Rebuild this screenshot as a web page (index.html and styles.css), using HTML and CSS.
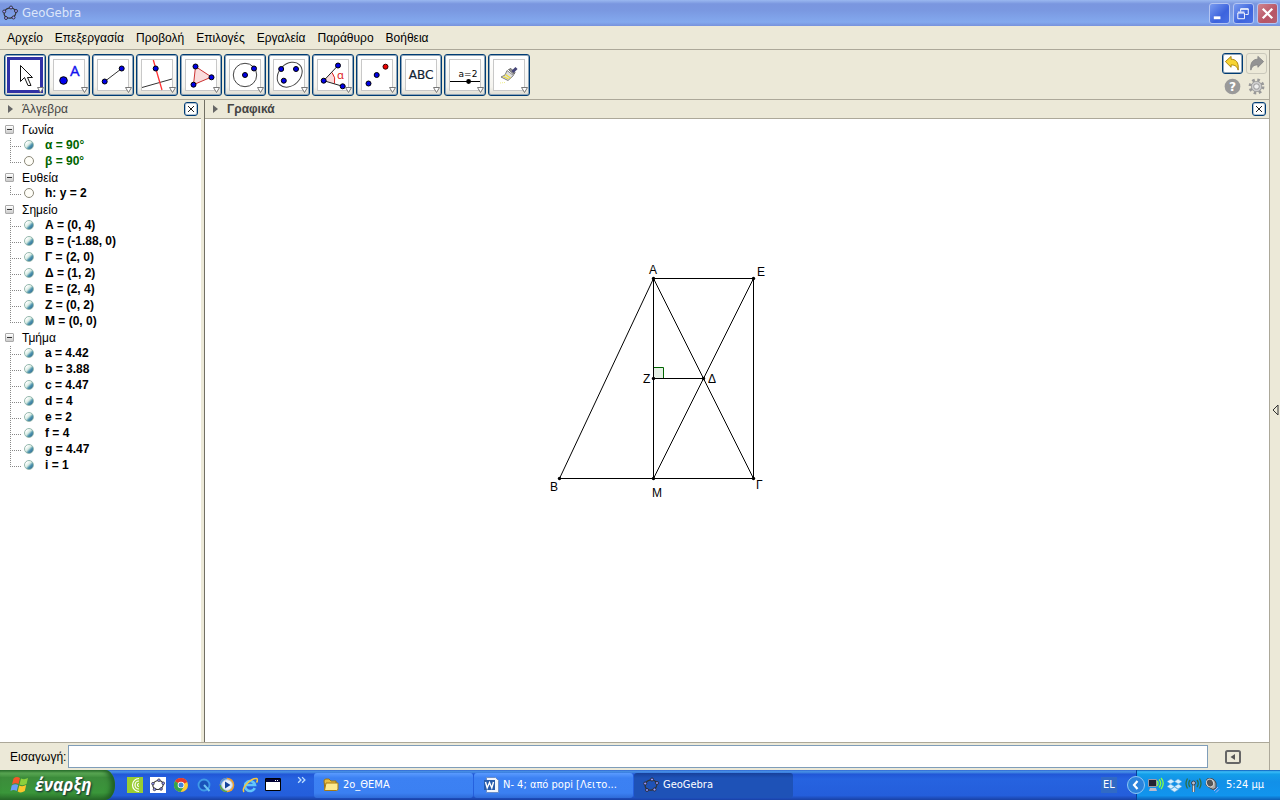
FILE: index.html
```html
<!DOCTYPE html>
<html lang="el">
<head>
<meta charset="utf-8">
<title>GeoGebra</title>
<link rel="stylesheet" href="styles.css">
</head>
<body>
<svg class="defs" aria-hidden="true">
  <defs>
    <symbol id="logo" viewBox="0 0 16 16">
      <ellipse cx="8" cy="8" rx="6" ry="5" fill="none" stroke="#333" stroke-width="1.2" transform="rotate(-15 8 8)"/>
      <g fill="#99f" stroke="#222" stroke-width=".8"><circle cx="9" cy="2.5" r="1.5"/><circle cx="14" cy="6" r="1.5"/><circle cx="11.5" cy="12.5" r="1.5"/><circle cx="4" cy="13" r="1.5"/><circle cx="2.2" cy="6.5" r="1.5"/></g>
    </symbol>
    <symbol id="drop" viewBox="0 0 7 6"><path d="M.5 .5h6L3.5 5.500z" fill="#fff" stroke="#777"/></symbol>
  </defs>
</svg>

<header class="titlebar">
  <svg class="icon16"><use href="#logo"/></svg>
  <h1 class="title">GeoGebra</h1>
  <button class="winbtn" aria-label="Ελαχιστοποίηση"><svg viewBox="0 0 20 20"><path d="M4 13h7v3H4z" fill="#fff"/></svg></button>
  <button class="winbtn" aria-label="Επαναφορά"><svg viewBox="0 0 20 20" fill="none" stroke="#fff"><path d="M7 8V5h8v6h-3M7 5.500h8M4 9.500h7v6H4zM4 8.500h7"/></svg></button>
  <button class="winbtn winclose" aria-label="Κλείσιμο"><svg viewBox="0 0 20 20"><path d="M5 5l10 10M15 5L5 15" stroke="#fff" stroke-width="2.400"/></svg></button>
</header>

<nav class="menubar">
  <button>Αρχείο</button><button>Επεξεργασία</button><button>Προβολή</button><button>Επιλογές</button><button>Εργαλεία</button><button>Παράθυρο</button><button>Βοήθεια</button>
</nav>

<div class="app">
<main class="main">
  <div class="toolbar">
    <button class="tool selected" aria-label="Μετακίνηση"><svg viewBox="2 2 38 38"><path d="M16.500 11.500v16l4-4 3.500 8h3l-3.500-8h5z" fill="#fff" stroke="#111"/><use href="#drop" x="33" y="33" width="7" height="6"/></svg></button>
    <button class="tool" aria-label="Σημείο"><svg viewBox="2 2 38 38"><circle cx="15.500" cy="26.500" r="3.800" fill="#00e" stroke="#000"/><text x="22" y="22" class="glyph-a">A</text><use href="#drop" x="33" y="33" width="7" height="6"/></svg></button>
    <button class="tool" aria-label="Τμήμα"><svg viewBox="2 2 38 38"><path d="M12.700 27.500L29.700 14.500" stroke="#333"/><g class="pt"><circle cx="12.700" cy="27.500" r="2.500"/><circle cx="29.700" cy="14.500" r="2.500"/></g><use href="#drop" x="33" y="33" width="7" height="6"/></svg></button>
    <button class="tool" aria-label="Κάθετη ευθεία"><svg viewBox="2 2 38 38"><path d="M6 33.500l30-8.500" stroke="#333"/><path d="M17.300 6L26 36" stroke="#f33" stroke-width="1.300"/><circle class="pt" cx="19.700" cy="14.500" r="2.500"/><use href="#drop" x="33" y="33" width="7" height="6"/></svg></button>
    <button class="tool" aria-label="Πολύγωνο"><svg viewBox="2 2 38 38"><path d="M15.500 12.500l16 10.500-18 7.700z" fill="#fadcdc" stroke="#c33"/><g class="pt"><circle cx="15.500" cy="12.500" r="2.500"/><circle cx="31.500" cy="23.300" r="2.500"/><circle cx="13.500" cy="30.700" r="2.500"/></g><use href="#drop" x="33" y="33" width="7" height="6"/></svg></button>
    <button class="tool" aria-label="Κύκλος"><svg viewBox="2 2 38 38"><circle cx="21" cy="21" r="11.700" fill="none" stroke="#444"/><g class="pt"><circle cx="21" cy="21" r="2.500"/><circle cx="30" cy="14.500" r="2.500"/></g><use href="#drop" x="33" y="33" width="7" height="6"/></svg></button>
    <button class="tool" aria-label="Έλλειψη"><svg viewBox="2 2 38 38"><ellipse cx="21.700" cy="20.700" rx="14" ry="10.700" transform="rotate(-45 21.700 20.700)" fill="none" stroke="#444"/><g class="pt"><circle cx="13.200" cy="15" r="2.500"/><circle cx="28" cy="15" r="2.500"/><circle cx="15.800" cy="26.700" r="2.500"/></g><use href="#drop" x="33" y="33" width="7" height="6"/></svg></button>
    <button class="tool" aria-label="Γωνία"><svg viewBox="2 2 38 38"><path d="M11.700 26.700L20 18.500Q24 23.500 22.500 29.500z" fill="#fadcdc"/><path d="M20 18.500Q24 23.500 22.500 29.500" fill="none" stroke="#d22"/><path d="M26 11.500L11.700 26.700l19 5.600" fill="none" stroke="#222"/><text x="25" y="25" class="glyph-alpha">α</text><g class="pt"><circle cx="26" cy="11.500" r="2.500"/><circle cx="11.700" cy="26.700" r="2.500"/><circle cx="30.700" cy="32.300" r="2.500"/></g><use href="#drop" x="33" y="33" width="7" height="6"/></svg></button>
    <button class="tool" aria-label="Συμμετρία"><svg viewBox="2 2 38 38"><g class="pt"><circle cx="12.500" cy="29.500" r="2.500"/><circle cx="20.700" cy="21" r="2.500"/></g><circle cx="29.500" cy="12.700" r="2.500" fill="#e00" stroke="#300"/><use href="#drop" x="33" y="33" width="7" height="6"/></svg></button>
    <button class="tool" aria-label="Κείμενο"><svg viewBox="2 2 38 38"><text x="21" y="25" text-anchor="middle" class="glyph-abc">ABC</text><use href="#drop" x="33" y="33" width="7" height="6"/></svg></button>
    <button class="tool" aria-label="Δρομέας"><svg viewBox="2 2 38 38"><text x="24" y="23" text-anchor="middle" class="glyph-eq">a=2</text><path d="M6 27.500h30" stroke="#000"/><circle cx="24.600" cy="27.500" r="2.400"/><use href="#drop" x="33" y="33" width="7" height="6"/></svg></button>
    <button class="tool" aria-label="Μορφοποίηση"><svg viewBox="2 2 38 38"><path d="M19 16.500l6.500 5-5.500 5-7-3.500 4-2z" fill="#ddd" stroke="#666" stroke-width=".8"/><path d="M15 22.500l5.500 2.500M17.500 20.500l5 3.500" stroke="#ed3" stroke-width="1.200"/><path d="M20.500 15.500l5.500 5 1-2-4-4z" fill="#999" stroke="#444" stroke-width=".7"/><path d="M24.500 18l4-4" stroke="#447" stroke-width="3"/><path d="M12 29l5-.5" stroke="#ee8" stroke-dasharray="1 1"/><use href="#drop" x="33" y="33" width="7" height="6"/></svg></button>
    <div class="actions">
      <button class="action undo" aria-label="Αναίρεση"><svg viewBox="0 0 18 18"><path d="M1.500 7L7.500 1.500v3C12 4.500 16 7 15 16c-1-4-3.500-5.500-7.500-5.500v2.500z" fill="#f7d433" stroke="#a8820a"/></svg></button>
      <button class="action redo" aria-label="Επανάληψη"><svg viewBox="0 0 18 18"><path d="M16.500 7L10.500 1.500v3C6 4.500 2 7 3 16c1-4 3.500-5.500 7.500-5.500v2.500z" fill="#939393" stroke="#888"/></svg></button>
      <button class="action" aria-label="Βοήθεια εργαλείου"><svg viewBox="0 0 18 18"><circle cx="9" cy="9" r="8.300" fill="#999"/><text x="9" y="13.500" text-anchor="middle" class="glyph-help">?</text></svg></button>
      <button class="action" aria-label="Ρυθμίσεις"><svg viewBox="0 0 18 18"><circle cx="9" cy="9" r="6.900" fill="none" stroke="#999" stroke-width="3" stroke-dasharray="2.710 2.710"/><circle cx="9" cy="9" r="4.200" fill="#eee" stroke="#999" stroke-width="3.400"/><circle cx="9" cy="9" r="4.200" fill="none" stroke="#ccc" stroke-width="1.800"/></svg></button>
    </div>
  </div>

  <div class="views">
    <section class="panel algebra">
      <div class="panelhead"><svg class="arrow" viewBox="0 0 5 8"><path d="M0 0l5 4-5 4z" fill="#666"/></svg><h2 class="panelname light">Άλγεβρα</h2><button class="close" aria-label="Κλείσιμο άλγεβρας"><svg viewBox="0 0 10 10"><path d="M2 2l6 6M8 2L2 8" stroke="#222"/></svg></button></div>
      <div class="tree">
        <button class="node">Γωνία</button>
        <ul class="items green"><li class="on">α = 90°</li><li>β = 90°</li></ul>
        <button class="node">Ευθεία</button>
        <ul class="items"><li>h: y = 2</li></ul>
        <button class="node">Σημείο</button>
        <ul class="items"><li class="on">Α = (0, 4)</li><li class="on">Β = (-1.88, 0)</li><li class="on">Γ = (2, 0)</li><li class="on">Δ = (1, 2)</li><li class="on">Ε = (2, 4)</li><li class="on">Ζ = (0, 2)</li><li class="on">Μ = (0, 0)</li></ul>
        <button class="node">Τμήμα</button>
        <ul class="items"><li class="on">a = 4.42</li><li class="on">b = 3.88</li><li class="on">c = 4.47</li><li class="on">d = 4</li><li class="on">e = 2</li><li class="on">f = 4</li><li class="on">g = 4.47</li><li class="on">i = 1</li></ul>
      </div>
    </section>
    <section class="panel graphics">
      <div class="panelhead"><svg class="arrow" viewBox="0 0 5 8"><path d="M0 0l5 4-5 4z" fill="#666"/></svg><h2 class="panelname">Γραφικά</h2><button class="close" aria-label="Κλείσιμο γραφικών"><svg viewBox="0 0 10 10"><path d="M2 2l6 6M8 2L2 8" stroke="#222"/></svg></button></div>
      <svg class="plane" role="img" aria-label="Γεωμετρικό σχήμα">
        <path d="M448.500 248.500h10v11h-10z" fill="#e5f0e5" stroke="#006400"/>
        <g stroke="#000" fill="none"><path d="M548.500 159.500h-100v200M548.500 159.500v200M354.500 359.500h194M448.500 259.500h50"/><path d="M354.500 359.500l94-200 100 200M448.500 359.500l100-200"/></g>
        <g><circle cx="448.500" cy="159.500" r="1.700"/><circle cx="548.500" cy="159.500" r="1.700"/><circle cx="448.500" cy="259.500" r="1.700"/><circle cx="498.500" cy="259.500" r="1.700"/><circle cx="354.500" cy="359.500" r="1.700"/><circle cx="448.500" cy="359.500" r="1.700"/><circle cx="548.500" cy="359.500" r="1.700"/></g>
        <g class="labels"><text x="444" y="155">Α</text><text x="552" y="157">Ε</text><text x="438" y="264">Ζ</text><text x="503" y="264">Δ</text><text x="345" y="372">Β</text><text x="447" y="378">Μ</text><text x="551" y="370">Γ</text></g>
      </svg>
    </section>
  </div>

  <div class="inputbar">
    <label for="cmd">Εισαγωγή:</label>
    <input id="cmd" type="text">
    <button class="inputhelp" aria-label="Βοήθεια εισαγωγής"><svg viewBox="0 0 16 14"><rect x="1" y="1" width="14" height="12" rx="1.500" fill="none" stroke="#666" stroke-width="2"/><path d="M10 4v6L5.500 7z" fill="#555"/></svg></button>
  </div>
</main>
<aside class="sidestrip"><button aria-label="Προοπτικές"><svg viewBox="0 0 7 12"><path d="M6 1v10L1 6z" fill="#ece9d8" stroke="#333"/></svg></button></aside>
</div>

<footer class="taskbar">
  <button class="start">
    <svg class="flag" viewBox="0 0 20 18"><path d="M3.500 2.500Q6.500 0 10 2L8.500 8Q5.500 6.500 2 8.500z" fill="#f4562a"/><path d="M11 2.500Q14.500 4 18 2L16.500 8Q13 10 9.500 8.500z" fill="#8bd03c"/><path d="M1.700 9.500Q5 7.500 8.200 9L6.700 15Q3.500 13 .5 15z" fill="#6a9df8"/><path d="M9.200 9.500Q12.500 11 16.200 9L14.800 15Q11 17.500 7.700 15.500z" fill="#fbc62c"/></svg>
    <span>έναρξη</span>
  </button>
  <div class="quick">
    <button aria-label="Notes"><svg viewBox="0 0 16 16"><path fill="#9acd32" d="M0 0h16v16H0z"/><g fill="none" stroke="#fff" stroke-width="1.200"><path d="M12 1.500a6.500 6.500 0 0 0 0 13M12 4a4 4 0 0 0 0 8M12 6.500a1.500 1.500 0 0 0 0 3"/></g></svg></button>
    <button aria-label="GeoGebra"><svg viewBox="0 0 16 16"><path fill="#fff" d="M0 0h16v16H0z"/><use href="#logo" x="1" y="1" width="14" height="14"/></svg></button>
    <button aria-label="Chrome"><svg viewBox="0 0 16 16"><circle cx="8" cy="8" r="7" fill="#fc3"/><path d="M8 8L2 4.300A7 7 0 0 1 14.300 5z" fill="#e33b2e"/><path d="M8 8L2 4.300A7 7 0 0 0 7.500 15L11 9.500z" fill="#35a44c"/><circle cx="8" cy="8" r="3.300" fill="#fff"/><circle cx="8" cy="8" r="2.500" fill="#3e83e0"/></svg></button>
    <button aria-label="QuickTime"><svg viewBox="0 0 16 16"><circle cx="8" cy="8" r="5.500" fill="#1953ba" stroke="#3f9ae8" stroke-width="1.800"/><path d="M8 8l5.500 6" stroke="#6cc4f4" stroke-width="2"/></svg></button>
    <button aria-label="Media Player"><svg viewBox="0 0 16 16"><circle cx="8" cy="8" r="7.300" fill="#f1a12d"/><path d="M8 .7a7.300 7.300 0 0 0-7.300 7.300H8z" fill="#4b8fe2"/><path d="M.7 8A7.300 7.300 0 0 0 8 15.300V8z" fill="#50a550"/><circle cx="8" cy="8" r="5.300" fill="#e8f1fc" stroke="#bcd"/><path d="M6 4.500v7l5.500-3.500z" fill="#12439c"/></svg></button>
    <button aria-label="Internet Explorer"><svg viewBox="0 0 16 16"><path d="M12.700 11a5 5 0 1 1 .3-3H4" fill="none" stroke="#63c5fa" stroke-width="2.600"/><path d="M2 15C-1 11 9 1 14.500 1.500c1.500.5 1 2.500 0 4" fill="none" stroke="#f8c83c" stroke-width="1.500"/></svg></button>
    <button aria-label="Επιφάνεια εργασίας"><svg viewBox="0 0 16 16"><path fill="#fff" stroke="#000" d="M.5 1.500h15v12H.5z"/><path fill="#003" d="M1 2h14v3H1z"/><path d="M10 3.500h4" stroke="#fff" stroke-dasharray="1 1"/></svg></button>
    <button class="more" aria-label="Περισσότερα"><svg viewBox="0 0 8 16"><path d="M1 1l2.500 2.500L1 6M4.500 1L7 3.500 4.500 6" fill="none" stroke="#bdf" stroke-width="1.200"/></svg></button>
  </div>
  <div class="tasks">
    <button class="task"><svg class="icon16" viewBox="0 0 16 16"><path d="M1 4q0-2 2-2h3l2 2h5v9H2z" fill="#e8bd42" stroke="#9c7412"/><path d="M3 6h12v6q0 1.500-1.500 1.500H1.500z" fill="#fdea90" stroke="#a77a12"/></svg><span>2ο_ΘΕΜΑ</span></button>
    <button class="task"><svg class="icon16" viewBox="0 0 16 16"><path d="M3.500 .5h9l3 3v12h-12z" fill="#f2f6fc" stroke="#6d8ec6"/><path d="M1 3h11v10H1z" fill="#275baa"/><path d="M2.500 5l1.700 6 2.300-5.500L8.800 11l1.700-6" fill="none" stroke="#fff" stroke-width="1.400"/></svg><span>Ν- 4; από popi [Λειτο...</span></button>
    <button class="task active"><svg class="icon16"><use href="#logo"/></svg><span>GeoGebra</span></button>
  </div>
  <button class="lang">EL</button>
  <div class="tray">
    <button class="collapse" aria-label="Απόκρυψη"><svg viewBox="0 0 18 18"><circle cx="9" cy="9" r="8.500" fill="#2b83dc" stroke="#8dc8f4"/><path d="M10.500 5L7 9l3.500 4" fill="none" stroke="#fff" stroke-width="2.200"/></svg></button>
    <svg viewBox="0 0 17 17"><path d="M1.500 2.500h8v7h-8z" fill="#223" stroke="#99a"/><path d="M3 11h6l1 3H2z" fill="#bbc"/><path d="M10 4q2 2 0 5M12 2.500q3.500 3.500 0 8M14 1q4.500 5 0 11" fill="none" stroke="#8f4" stroke-width="1.300"/></svg>
    <svg viewBox="0 0 17 17" fill="#d8eefd" stroke="#58a7df" stroke-width=".6"><path d="M5 2l3.500 2.500L4.500 7 1 4.500zM12 2l4 2.500L12.500 7l-4-2.500zM4.500 7l4 2.500L5 12 1 9.500zM12.500 7L16 9.500 12 12 8.500 9.500zM4.500 12.500l4-2.500 4 2.500-4 2.500z"/></svg>
    <svg viewBox="0 0 17 17" fill="none"><path d="M8.500 7v8" stroke="#456" stroke-width="3"/><path d="M8.500 7v8" stroke="#ddd" stroke-width="1.400"/><circle cx="8.500" cy="6" r="2" fill="#bbc" stroke="#345"/><path d="M5 3q-2.500 3.500 0 7M2.500 1.500q-3 5 0 10M12 3q2.500 3.500 0 7M14.500 1.500q3 5 0 10" stroke="#2f6f45" stroke-width="1.300"/></svg>
    <svg viewBox="0 0 17 17"><path d="M3 2Q10 0 12 6v5q-3 3-6 0L2 8z" fill="#aaa" stroke="#444"/><ellipse cx="6" cy="6" rx="3.500" ry="4" fill="#555" stroke="#ddd" transform="rotate(-25 6 6)"/><path d="M10 14l4-4M12 15.500l3-3" stroke="#a9b2ff"/></svg>
    <time class="clock">5:24 μμ</time>
  </div>
</footer>
</body>
</html>
```
FILE: styles.css
```css
*, *::before, *::after { box-sizing: border-box; }
body { margin: 0; height: 100vh; display: flex; flex-direction: column; overflow: hidden; background: #ece9d8; color: #000; font: 12px/16px "Liberation Sans", Arial, sans-serif; }
button { margin: 0; padding: 0; border: 0; background: none; font: inherit; color: inherit; }
h1, h2, ul { margin: 0; padding: 0; }
svg { display: block; flex: none; }
.defs { position: absolute; width: 0; height: 0; }
.icon16 { width: 16px; height: 16px; }

.titlebar { display: flex; align-items: center; gap: 2px; height: 26px; flex: none; padding: 0 2px; background: linear-gradient(#9ab8f0, #7a96df 15%, #7a98e1 40%, #83a9ee 85%, #7792dc); }
.title { flex: 1; padding-left: 2px; font: 13px/18px "DejaVu Sans Condensed", sans-serif; color: #dce6fa; }
.winbtn { width: 21px; height: 21px; border: 1px solid #b4c5f2; border-radius: 3px; background: linear-gradient(135deg, #7a9cf0, #3c63dd 60%, #4a70e4); }
.winbtn + .winbtn { margin-left: 1px; }
.winclose { background: linear-gradient(135deg, #cf8590, #b85565 60%, #b35f72); }
.winbtn svg { width: 19px; height: 19px; }

.menubar { display: flex; align-items: center; gap: 12px; height: 24px; flex: none; padding: 0 7px; border-bottom: 1px solid #aca899; }

.app { flex: 1; min-height: 0; display: flex; }
.main { flex: 1; min-width: 0; display: flex; flex-direction: column; border-right: 1px solid #aca899; }
.sidestrip { width: 10px; display: flex; align-items: center; justify-content: center; }
.sidestrip svg { width: 7px; height: 12px; }

.toolbar { display: flex; gap: 2px; align-items: center; height: 50px; flex: none; padding: 0 2px 0 4px; border-bottom: 1px solid #aca899; }
.tool { position: relative; width: 42px; height: 42px; padding: 1px; border: 1px solid #003c74; border-radius: 3px; box-shadow: inset 0 0 0 1px #8fa5b8; background: linear-gradient(#fff, #f4f3ee 80%, #dedbd0); }
.tool::before { content: ""; position: absolute; inset: 4px; border: 1px solid #c8c8c8; background: #fff; }
.tool.selected::before { inset: 2px; border: 3px solid #3131a5; }
.tool svg { position: relative; width: 38px; height: 38px; }
.pt { fill: #0000e6; stroke: #000; stroke-width: 1px; }
.glyph-a { font: 15px "Noto Sans", sans-serif; fill: #1414ee; stroke: #1414ee; stroke-width: .3px; }
.glyph-alpha { font: 11px "Noto Sans", sans-serif; fill: #d22; }
.glyph-abc { font: 12px "DejaVu Sans", sans-serif; fill: #123; stroke: #123; stroke-width: .2px; }
.glyph-eq { font: 9px "DejaVu Sans", sans-serif; }
.glyph-help { font: bold 13px "DejaVu Sans", sans-serif; fill: #fff; }
.actions { margin-left: auto; display: grid; grid-template-columns: 21px 21px; grid-auto-rows: 21px; gap: 2px 3px; }
.action { display: grid; place-items: center; border-radius: 3px; }
.action svg { width: 17px; height: 17px; }
.undo { border: 1px solid #003c74; box-shadow: inset 0 0 0 1px #8fa5b8; background: #fff; }
.redo { border: 1px solid #cac8bb; }

.views { flex: 1; min-height: 0; display: flex; }
.panel { display: flex; flex-direction: column; background: #fff; }
.algebra { width: 201px; flex: none; }
.graphics { flex: 1; min-width: 0; margin-left: 3px; border-left: 1px solid #716f64; }
.panelhead { display: flex; align-items: center; height: 19px; flex: none; padding: 0 3px 0 8px; background: #ece9d8; border-bottom: 1px solid #aca899; }
.arrow { width: 5px; height: 8px; }
.panelname { flex: 1; padding-left: 9px; font: bold 12px/16px "Liberation Sans", Arial, sans-serif; color: #444; }
.panelname.light { font-weight: normal; }
.close { display: grid; place-items: center; width: 14px; height: 14px; border: 1px solid #003c74; border-radius: 3px; box-shadow: inset 0 0 0 1px #b5c4d2; background: #fff; }
.close svg { width: 10px; height: 10px; }

.tree { padding-top: 3px; }
.node { position: relative; display: block; width: 100%; padding-left: 22px; text-align: left; line-height: 16px; }
.node::before { content: ""; position: absolute; left: 5px; top: 3px; width: 9px; height: 9px; border: 1px solid #aaa; border-radius: 1px; background: linear-gradient(#333, #333) center / 5px 1px no-repeat, linear-gradient(#fff, #ccc); }
.items { list-style: none; font: bold 12px/14px "Liberation Sans", Arial, sans-serif; }
.items li { position: relative; height: 16px; padding-left: 45px; }
.items li::before { content: ""; position: absolute; left: 24px; top: 2px; width: 10px; height: 10px; border: 1px solid #8b8878; border-radius: 50%; background: #fffef8; }
.items .on::before { border-color: #94b8ad; background: linear-gradient(135deg, #fff 20%, #d7ebe2 45%, #4c93ac 65%, #2b5f94); }
.items li::after { content: ""; position: absolute; left: 10px; top: 0; width: 11px; height: 9px; border-left: 1px dotted #888; border-bottom: 1px dotted #888; }
.items li:not(:last-child)::after { border-left: 0; }
.items li:not(:last-child) { background: repeating-linear-gradient(#888 0 1px, transparent 1px 2px) 10px 0 / 1px 100% no-repeat; }
.green { color: #006400; }

.plane { flex: 1; width: 100%; min-height: 0; }
.labels { font: 12px "Liberation Sans", Arial, sans-serif; }

.inputbar { display: flex; align-items: center; height: 28px; flex: none; padding: 0 28px 0 10px; border-top: 1px solid #aca899; }
.inputbar input { flex: 1; min-width: 0; height: 23px; margin: 0 17px 0 2px; border: 1px solid #7f9db9; background: #fff; font: inherit; }
.inputhelp svg { width: 16px; height: 14px; }

.taskbar { display: flex; height: 30px; flex: none; color: #fff; font: 11px/16px "DejaVu Sans Condensed", sans-serif; background: linear-gradient(#3168d5, #4993e6 6%, #2157d7 14%, #2663e0 30%, #245edb 85%, #1941a5); }
.start { display: flex; align-items: center; gap: 5px; width: 115px; flex: none; padding-left: 10px; border-radius: 0 10px 10px 0 / 0 15px 15px 0; background: linear-gradient(#2f7a31, #5eac56 10%, #3c8c3b 25%, #3a963a 75%, #2a6f2a); box-shadow: inset -4px 0 5px #205f25; font: italic bold 17px/24px "Open Sans", sans-serif; text-shadow: 1px 1px 2px #123; }
.flag { width: 20px; height: 20px; }
.quick { display: flex; align-items: center; gap: 7px; padding-left: 12px; width: 199px; flex: none; }
.quick svg { width: 16px; height: 16px; }
.quick .more { margin-left: 9px; }
.quick .more svg { width: 9px; height: 18px; }
.tasks { flex: 1; min-width: 0; display: flex; align-items: center; gap: 1px; }
.task { display: flex; align-items: center; gap: 4px; flex: 0 1 159px; height: 25px; padding: 0 9px; border-radius: 3px; background: linear-gradient(#5a9bff, #3c81f3 20%, #3b80f2 80%, #2f6bd8); white-space: nowrap; overflow: hidden; }
.active { background: linear-gradient(#17409a, #1e52b7 20%, #1e52b7); }
.lang { align-self: center; width: 16px; margin-right: 19px; background: #316ac5; }
.tray { display: flex; align-items: center; gap: 2px; width: 144px; flex: none; border-left: 1px solid #0a3f97; background: linear-gradient(#0c59b9, #3bbdf8 6%, #139ee9 14%, #1290e8 40%, #1195ee 85%, #0d5fb5); }
.tray svg { width: 17px; height: 17px; }
.collapse { margin-left: -10px; }
.tray .collapse svg { width: 18px; height: 18px; }
.clock { margin-left: auto; padding-right: 16px; }
```
